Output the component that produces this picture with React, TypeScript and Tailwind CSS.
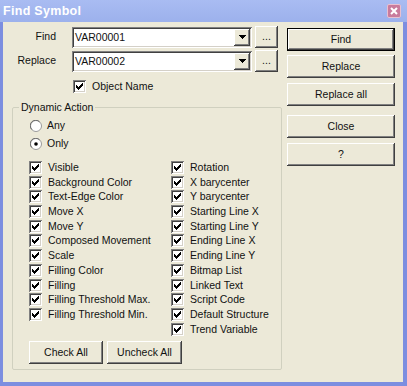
import React from 'react';

const FONT = { fontFamily: '"Liberation Sans", Arial, sans-serif' };

const raised =
  'bg-[#ece9d8] shadow-[inset_-1px_-1px_0_#404040,inset_1px_1px_0_#fff,inset_-2px_-2px_0_#808080,inset_2px_2px_0_#ece9d8]';
const sunken =
  'bg-white shadow-[inset_1px_1px_0_#808080,inset_-1px_-1px_0_#fff,inset_2px_2px_0_#404040,inset_-2px_-2px_0_#d4d0c8]';

const leftItems = [
  'Visible',
  'Background Color',
  'Text-Edge Color',
  'Move X',
  'Move Y',
  'Composed Movement',
  'Scale',
  'Filling Color',
  'Filling',
  'Filling Threshold Max.',
  'Filling Threshold Min.',
];

const rightItems = [
  'Rotation',
  'X barycenter',
  'Y barycenter',
  'Starting Line X',
  'Starting Line Y',
  'Ending Line X',
  'Ending Line Y',
  'Bitmap List',
  'Linked Text',
  'Script Code',
  'Default Structure',
  'Trend Variable',
];

// classic 7x7 tick, one 3px tall column per step
const tickTops = [2, 3, 4, 3, 2, 1, 0];

function CheckBox() {
  return (
    <div className={`w-[13px] h-[13px] shrink-0 ${sunken}`}>
      <svg width="13" height="13" viewBox="0 0 13 13" shapeRendering="crispEdges">
        {tickTops.map((t, i) => (
          <rect key={i} x={3 + i} y={3 + t} width="1" height="3" fill="#000" />
        ))}
      </svg>
    </div>
  );
}

function Radio({ checked }: { checked?: boolean }) {
  return (
    <svg width="12" height="12" viewBox="0 0 12 12" className="shrink-0">
      <circle cx="6" cy="6" r="5.5" fill="#fff" stroke="#9a9a9a" />
      <path d="M1.8 9.5 A5 5 0 0 1 9.5 1.8" fill="none" stroke="#6a6a6a" strokeWidth="1" />
      {checked && <circle cx="6" cy="6" r="1.8" fill="#000" />}
    </svg>
  );
}

function CheckRow({ label }: { label: string }) {
  return (
    <div className="h-[14.7px] flex items-start gap-[6px]">
      <CheckBox />
      <span className="leading-[13px]">{label}</span>
    </div>
  );
}

function Combo({ value }: { value: string }) {
  return (
    <div className={`w-[180px] h-[21px] flex items-center ${sunken}`}>
      <span className="flex-1 pl-[3px] leading-[13px]">{value}</span>
      <div className={`w-[16px] h-[17px] mr-[2px] flex items-center justify-center ${raised}`}>
        <svg width="7" height="4" viewBox="0 0 7 4" shapeRendering="crispEdges">
          <path d="M0 0h7v1h-1v1h-1v1h-1v1h-1v-1h-1v-1h-1v-1h-1z" fill="#000" />
        </svg>
      </div>
    </div>
  );
}

function DialogButton({ label, def }: { label: string; def?: boolean }) {
  return (
    <div
      className={`w-[108px] h-[23px] flex items-center justify-center ${raised} ${
        def ? 'border border-black' : ''
      }`}
    >
      {label}
    </div>
  );
}

export default function App() {
  return (
    <div className="w-[407px] h-[386px] flex flex-col bg-[#7c8ee0] text-[10.5px] text-[#111]" style={FONT}>
      <div className="h-[22px] flex items-center justify-between pl-[3px] pr-[6px] bg-gradient-to-b from-[#a9bcf2] to-[#9cb1ec]">
        <span className="font-bold text-[12.5px] text-white tracking-[0.3px]">Find Symbol</span>
        <div className="w-[14px] h-[14px] rounded-[2px] bg-[#c97b9c] border border-[#e8c0d0] flex items-center justify-center">
          <svg width="8" height="8" viewBox="0 0 8 8">
            <path d="M1 1L7 7M7 1L1 7" stroke="#fff" strokeWidth="2" />
          </svg>
        </div>
      </div>

      <div className="flex-1 ml-[3px] mr-[4px] mb-[4px] bg-[#ece9d8] flex">
        <div className="w-[278px] pt-[4px] flex flex-col">
          <div className="h-[22px] flex items-center">
            <span className="w-[53px] text-right">Find</span>
            <div className="ml-[16px]">
              <Combo value="VAR00001" />
            </div>
            <div className={`ml-[3px] w-[23px] h-[22px] flex items-center justify-center ${raised}`}>...</div>
          </div>
          <div className="mt-[2px] h-[22px] flex items-center">
            <span className="w-[53px] text-right">Replace</span>
            <div className="ml-[16px]">
              <Combo value="VAR00002" />
            </div>
            <div className={`ml-[3px] w-[23px] h-[22px] flex items-center justify-center ${raised}`}>...</div>
          </div>
          <div className="mt-[8px] h-[13px] flex items-center gap-[6px] pl-[70px]">
            <CheckBox />
            <span className="leading-[13px]">Object Name</span>
          </div>

          <fieldset className="mt-[8px] ml-[9px] w-[270px] border border-[#d0d0bf] rounded-[2px]">
            <legend className="ml-[6px] px-[2px] leading-[13px]">Dynamic Action</legend>
            <div className="pl-[16px] pt-[5px] pb-[5px] flex flex-col">
              <div className="h-[13px] flex items-center gap-[5px] pl-[1px]">
                <Radio />
                <span>Any</span>
              </div>
              <div className="mt-[5px] h-[13px] flex items-center gap-[5px] pl-[1px]">
                <Radio checked />
                <span>Only</span>
              </div>
              <div className="mt-[11px] flex">
                <div className="w-[142px] flex flex-col">
                  {leftItems.map((l) => (
                    <CheckRow key={l} label={l} />
                  ))}
                </div>
                <div className="flex flex-col">
                  {rightItems.map((l) => (
                    <CheckRow key={l} label={l} />
                  ))}
                </div>
              </div>
              <div className="mt-[4px] flex gap-[4px]">
                <div className={`w-[74px] h-[23px] flex items-center justify-center ${raised}`}>Check All</div>
                <div className={`w-[75px] h-[23px] flex items-center justify-center ${raised}`}>Uncheck All</div>
              </div>
            </div>
          </fieldset>
        </div>

        <div className="ml-[6px] pt-[6px] flex flex-col">
          <DialogButton label="Find" def />
          <div className="mt-[4px]">
            <DialogButton label="Replace" />
          </div>
          <div className="mt-[5px]">
            <DialogButton label="Replace all" />
          </div>
          <div className="mt-[9px]">
            <DialogButton label="Close" />
          </div>
          <div className="mt-[5px]">
            <DialogButton label="?" />
          </div>
        </div>
      </div>
    </div>
  );
}
